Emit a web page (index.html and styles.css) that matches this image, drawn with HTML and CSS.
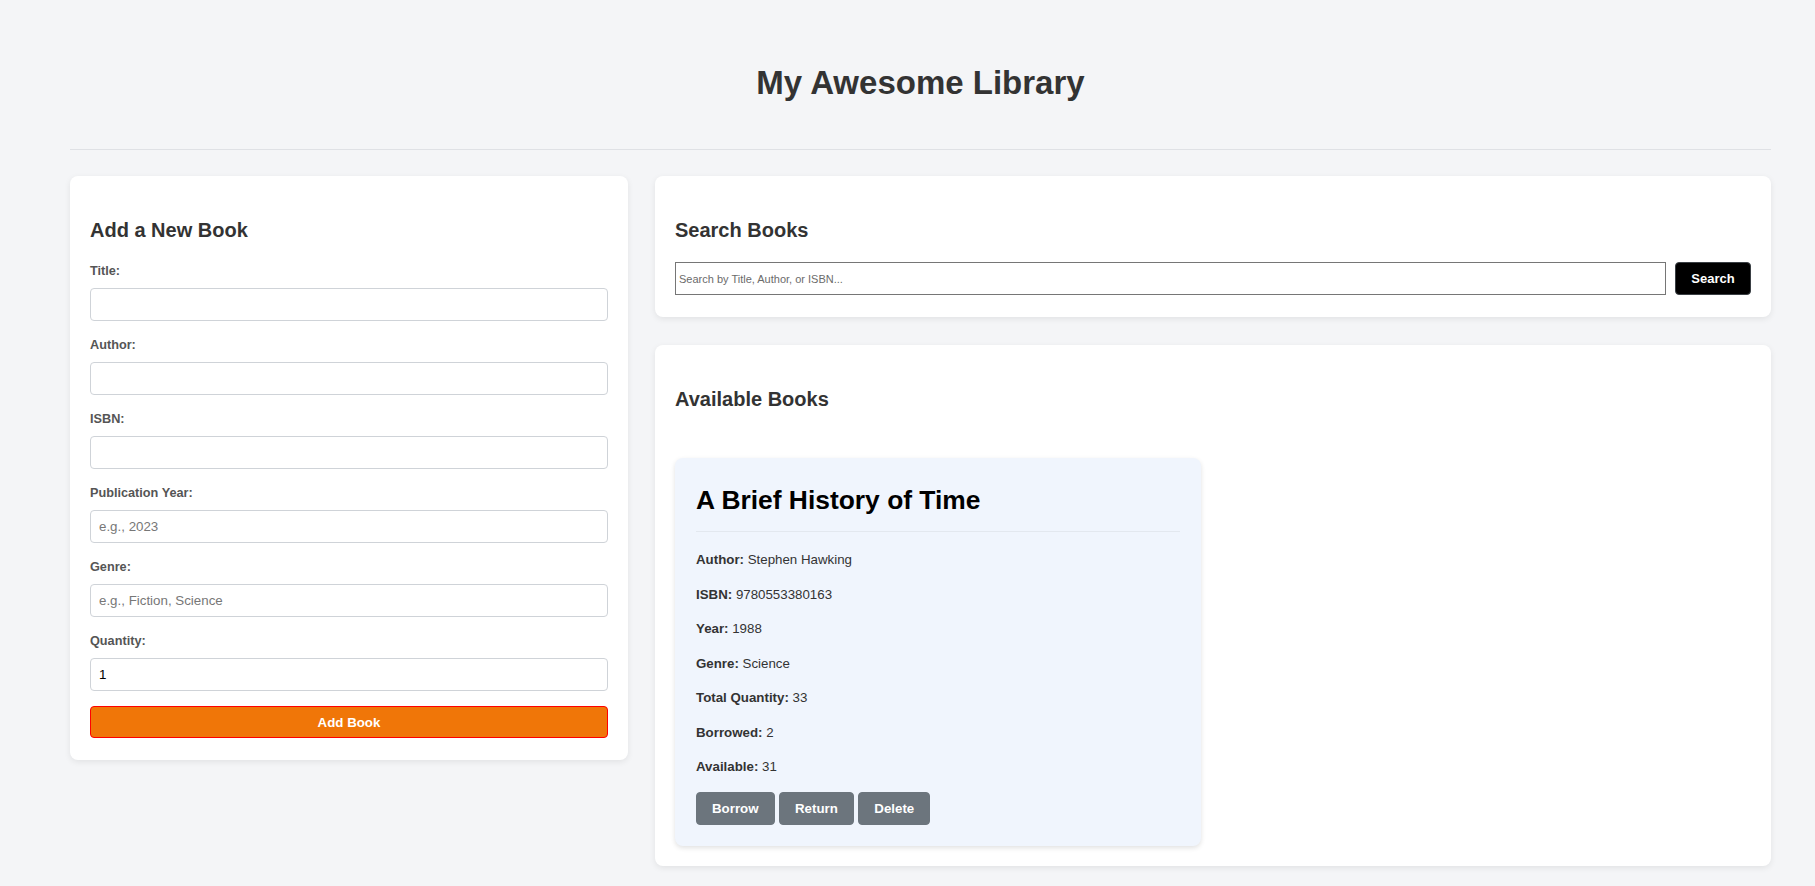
FILE: index.html
```html
<!DOCTYPE html>
<html lang="en">
<head>
<meta charset="utf-8">
<title>My Awesome Library</title>
<link rel="stylesheet" href="styles.css">
</head>
<body>
<div class="container">
  <header class="page-header">
    <h1>My Awesome Library</h1>
  </header>
  <main class="layout">
    <section class="card add-card">
      <h2>Add a New Book</h2>
      <form class="book-form">
        <div class="form-group">
          <label>Title:</label>
          <input type="text">
        </div>
        <div class="form-group">
          <label>Author:</label>
          <input type="text">
        </div>
        <div class="form-group">
          <label>ISBN:</label>
          <input type="text">
        </div>
        <div class="form-group">
          <label>Publication Year:</label>
          <input type="text" placeholder="e.g., 2023">
        </div>
        <div class="form-group">
          <label>Genre:</label>
          <input type="text" placeholder="e.g., Fiction, Science">
        </div>
        <div class="form-group">
          <label>Quantity:</label>
          <input type="text" value="1">
        </div>
        <button type="button" class="add-btn">Add Book</button>
      </form>
    </section>
    <div class="right-col">
      <section class="card search-card">
        <h2>Search Books</h2>
        <div class="search-row">
          <input type="text" class="search-input" placeholder="Search by Title, Author, or ISBN...">
          <button type="button" class="search-btn">Search</button>
        </div>
      </section>
      <section class="card">
        <h2>Available Books</h2>
        <div class="book-list">
          <article class="book-card">
            <h3>A Brief History of Time</h3>
            <p><strong>Author:</strong> Stephen Hawking</p>
            <p><strong>ISBN:</strong> 9780553380163</p>
            <p><strong>Year:</strong> 1988</p>
            <p><strong>Genre:</strong> Science</p>
            <p><strong>Total Quantity:</strong> 33</p>
            <p><strong>Borrowed:</strong> 2</p>
            <p><strong>Available:</strong> 31</p>
            <div class="actions">
              <button type="button" class="act-btn">Borrow</button>
              <button type="button" class="act-btn">Return</button>
              <button type="button" class="act-btn">Delete</button>
            </div>
          </article>
        </div>
      </section>
    </div>
  </main>
</div>
</body>
</html>
```

FILE: styles.css
```css
* { box-sizing: border-box; }

body {
  margin: 0;
  background: #f4f5f7;
  font-family: "Liberation Sans", Arial, Helvetica, sans-serif;
  color: #333;
}

.container {
  padding: 0 44px 40px 70px;
}

.page-header {
  padding: 64px 0 47px;
  border-bottom: 1px solid #dfe1e5;
  text-align: center;
}

.page-header h1 {
  margin: 0;
  font-size: 33px;
  font-weight: bold;
  color: #333;
}

.layout {
  margin-top: 26px;
  display: grid;
  grid-template-columns: 1fr 2fr;
  gap: 27px;
  align-items: start;
}

.right-col {
  display: flex;
  flex-direction: column;
  gap: 28px;
}

.card {
  background: #fff;
  border-radius: 8px;
  padding: 20px;
  box-shadow: 0 2px 6px rgba(0, 0, 0, 0.08);
}

.add-card {
  padding-bottom: 22px;
}

.search-card {
  padding-bottom: 22px;
}

.card h2 {
  margin: 23px 0 20px;
  font-size: 20px;
  font-weight: bold;
  color: #333;
}

.form-group {
  margin-bottom: 15px;
}

.form-group label {
  display: block;
  font-size: 12.7px;
  line-height: 18px;
  font-weight: bold;
  color: #555;
  margin-bottom: 8px;
}

.form-group input {
  display: block;
  width: 100%;
  height: 33px;
  padding: 0 8px;
  border: 1px solid #cfd3d8;
  border-radius: 4px;
  font-family: "Liberation Sans", Arial, sans-serif;
  font-size: 13.333px;
  color: #000;
  background: #fff;
}

.form-group input::placeholder {
  color: #777;
}

.add-btn {
  display: block;
  width: 100%;
  height: 32px;
  margin-top: 1px;
  background: #f07608;
  border: 1px solid #ff0000;
  border-radius: 4px;
  color: #fff;
  font-family: "Liberation Sans", Arial, sans-serif;
  font-size: 13.3px;
  font-weight: bold;
}

.search-row {
  display: flex;
  gap: 9px;
  align-items: center;
}

.search-input {
  flex: 1;
  height: 33px;
  padding: 1px 3px;
  border: 1px solid #767676;
  border-radius: 0;
  font-family: "Liberation Sans", Arial, sans-serif;
  font-size: 11px;
}

.search-input::placeholder {
  color: #6b6b6b;
}

.search-btn {
  width: 76px;
  height: 33px;
  background: #000;
  border: 1px solid #3a3f44;
  border-radius: 4px;
  color: #fff;
  font-family: "Liberation Sans", Arial, sans-serif;
  font-size: 13px;
  font-weight: bold;
}

.book-list {
  padding-top: 27px;
  display: grid;
  grid-template-columns: repeat(2, 1fr);
  gap: 25px;
}

.book-card {
  background: #f0f5fd;
  border-radius: 8px;
  padding: 21px;
  box-shadow: 0 2px 5px rgba(0, 0, 0, 0.12);
}

.book-card h3 {
  margin: 6px 0 18px;
  padding-bottom: 15px;
  border-bottom: 1px solid #e3e8ef;
  font-size: 26.4px;
  font-weight: bold;
  color: #000;
}

.book-card p {
  margin: 0 0 14.5px;
  font-size: 13.3px;
  line-height: 20px;
  color: #333;
}

.book-card p strong {
  color: #333;
}

.act-btn {
  height: 33px;
  padding: 0 15px;
  background: #6c757d;
  border: 1px solid #6c757d;
  border-radius: 4px;
  color: #fff;
  font-family: "Liberation Sans", Arial, sans-serif;
  font-size: 13.3px;
  font-weight: bold;
}
```
